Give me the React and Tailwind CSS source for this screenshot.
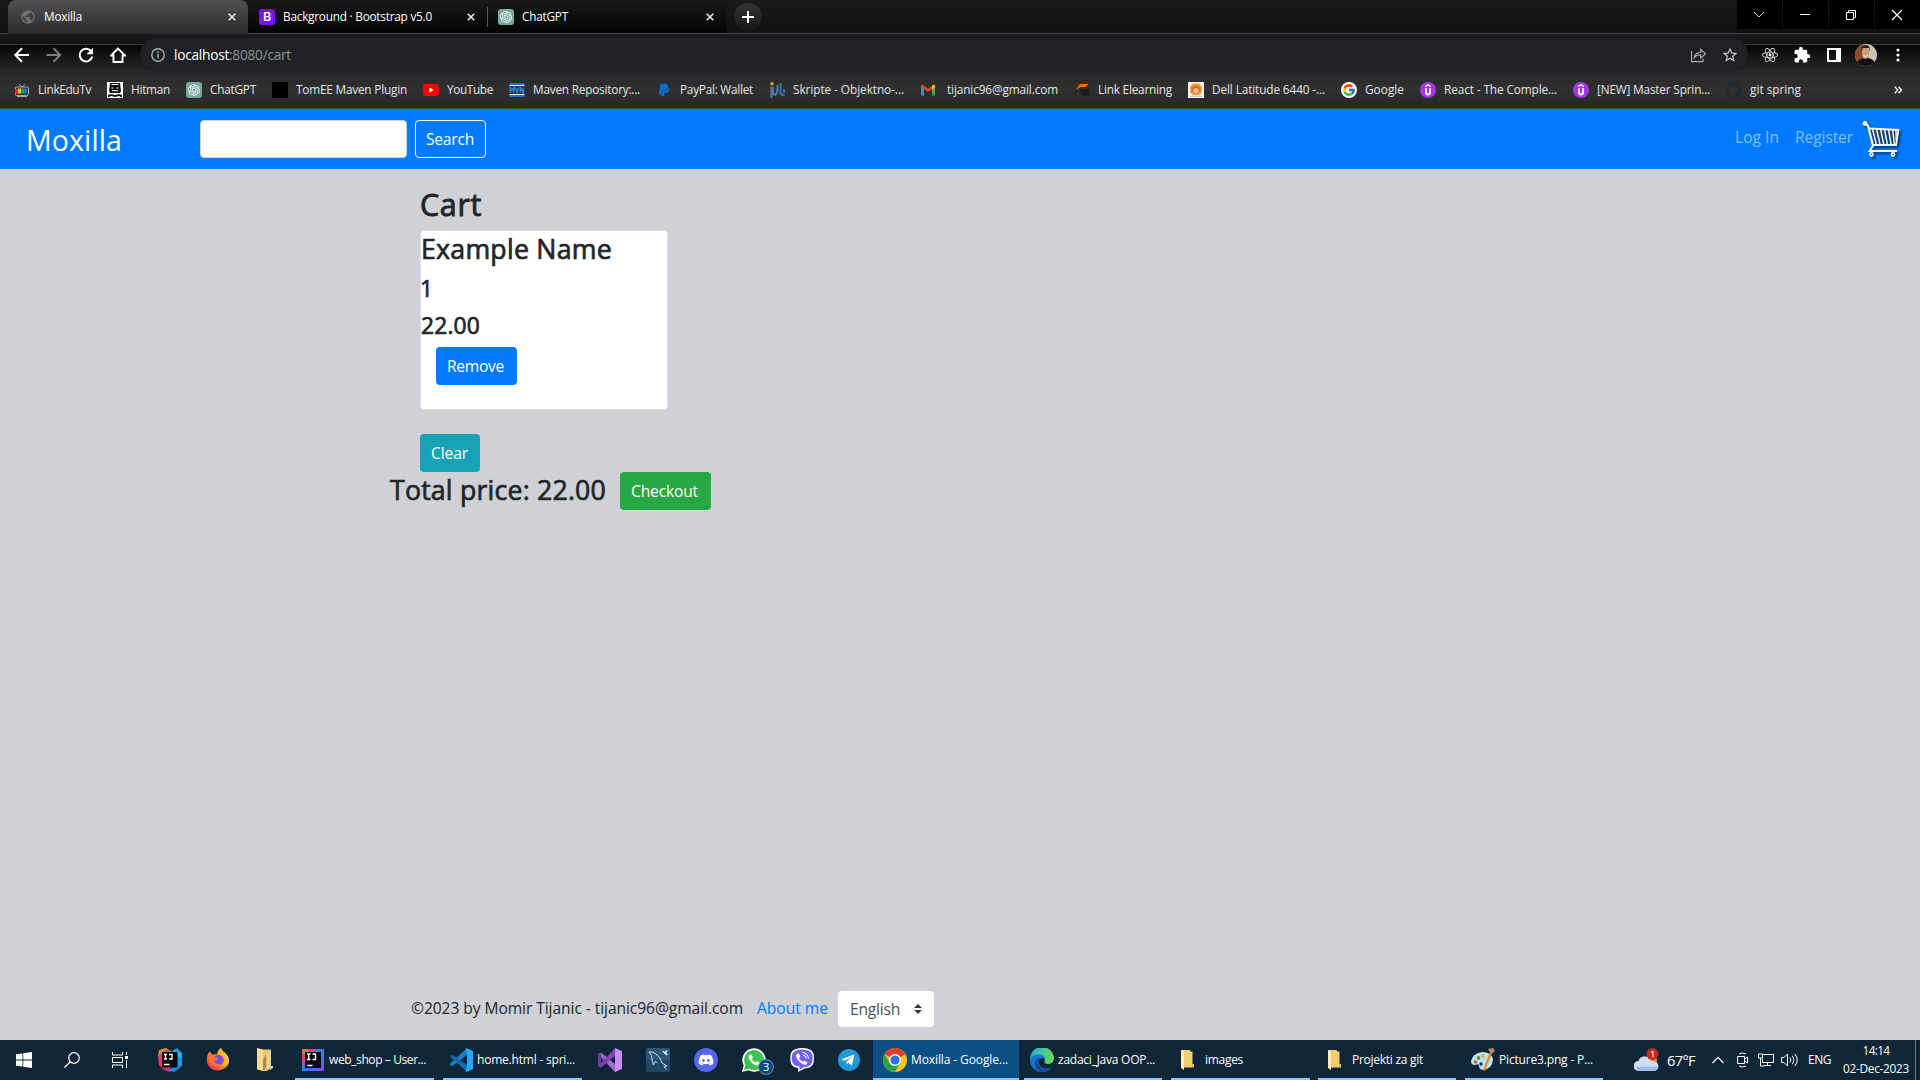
import { useLayoutEffect, useRef, useState } from "react";
import { FaPaypal, FaGithub, FaDiscord, FaTelegramPlane, FaReact } from "react-icons/fa";
import { FcGoogle } from "react-icons/fc";
import { SiOpenai } from "react-icons/si";
import { MdExtension, MdOutlineStarBorder, MdPublic } from "react-icons/md";

/* Single-line label whose letter spacing is adjusted to fill a given width. */
function Label({ w, className = "", children }) {
  const ref = useRef(null);
  const [spacing, setSpacing] = useState(0);
  useLayoutEffect(() => {
    const natural = ref.current.getBoundingClientRect().width;
    setSpacing((w - natural) / ref.current.textContent.length);
  }, [w]);
  return (
    <span className={"block shrink-0 whitespace-nowrap " + className} style={{ width: w }}>
      <span ref={ref} style={{ letterSpacing: spacing }}>{children}</span>
    </span>
  );
}

/* ---------- small icons ---------- */

const ChatIcon = () => (
  <span className="flex size-4 shrink-0 items-center justify-center rounded-[3px] bg-[#74aa9c]">
    <SiOpenai className="size-3 text-white" />
  </span>
);

const BootstrapIcon = () => (
  <span className="flex size-4 shrink-0 items-center justify-center rounded-[3px] bg-[#7a12f5] text-[13px] font-semibold leading-none text-white">B</span>
);

const CloseX = () => (
  <svg viewBox="0 0 8 8" className="size-2 shrink-0"><path d="M.7.7l6.6 6.6M7.3.7L.7 7.3" stroke="#e8e8e8" strokeWidth="1.6" /></svg>
);

const TvIcon = () => (
  <svg viewBox="0 0 16 16" className="size-4 shrink-0">
    <path d="M5 2l3 3 3-3" stroke="#aaa" fill="none" />
    <rect x="1.500" y="5" width="13" height="8.500" rx="1" fill="#333" stroke="#a8a8a8" />
    <path d="M1 7h3v4.500H1z" fill="#e33022" /><path d="M4 6.500h3v5H4z" fill="#f3c41c" />
    <path d="M7 6.500h3v5H7z" fill="#22a24a" /><path d="M10 6.500h3v5h-3z" fill="#1f6fd0" />
    <path d="M3 14.500h10" stroke="#aaa" />
  </svg>
);

const HitmanIcon = () => (
  <svg viewBox="0 0 16 16" className="size-4 shrink-0">
    <path d="M0 0h16v16H0z" fill="#fff" />
    <path d="M3 1h10l1 8-1 2H3L2 9z" fill="#111" />
    <path d="M4.500 2.500h7M4.500 6h2M9.500 6h2M5 8.700h6" stroke="#fff" />
    <path d="M1 15.500V13q3-1.500 7 0 4-1.500 7 0v2.500l-3-1.500-4 1-4-1z" fill="#111" />
  </svg>
);

const YoutubeIcon = () => (
  <svg viewBox="0 0 16 16" className="size-4 shrink-0">
    <rect x="0" y="2" width="16" height="12" rx="3.2" fill="#f00" /><path d="M6.4 5.5v5L10.8 8z" fill="#fff" />
  </svg>
);

const MavenIcon = () => (
  <svg viewBox="0 0 16 16" className="size-4 shrink-0">
    <path d="M.5 1h15v2.500H.5zM.5 13h15v2H.5z" fill="#1b6fd6" />
    <path d="M.5 3.500h15M.5 12.500h15" stroke="#fff" strokeWidth="1" />
    <path d="M1.200 11V5.500L3 8.500l1.800-3V11M6.500 5.500L8 10.500l1.500-5M11.200 11V5.500l3.200 5V5.500" stroke="#2a86ee" strokeWidth="1.400" fill="none" />
  </svg>
);

const PaypalIcon = () => (
  <span className="flex size-4 shrink-0 items-center justify-center"><FaPaypal className="size-3.5 text-[#0a6fc8]" /></span>
);

const SkripteIcon = () => (
  <svg viewBox="0 0 16 16" className="size-4 shrink-0">
    <circle cx="3" cy="1.800" r="1.700" fill="#f59b23" />
    <path d="M2.500 4.500V16M4 5v7q3.500 2 4.500-3V3" stroke="#51789c" strokeWidth="2.200" fill="none" />
    <path d="M11.500 1v9q0 4 4 3M15 7v4" stroke="#2f6ea8" strokeWidth="2.200" fill="none" />
  </svg>
);

const GmailIcon = () => (
  <svg viewBox="0 0 16 16" className="size-4 shrink-0">
    <path d="M1 4v9.500h3V6.500z" fill="#4285f4" /><path d="M15 4v9.500h-3V6.500z" fill="#34a853" />
    <path d="M1 3.500l1.500-1L8 7l5.500-4.500 1.500 1v1L8 10 1 4.500z" fill="#ea4335" />
    <path d="M12 4l2-1.500 1 1v2L12 8z" fill="#fbbc04" />
  </svg>
);

const ElearningIcon = () => (
  <svg viewBox="0 0 16 16" className="size-4 shrink-0">
    <path d="M6 7h9.500v7H9l-3-3z" fill="#1c1c1c" />
    <path d="M2 7.500L6 2h8.500l-4 4L7 5z" fill="#ef6a1a" /><path d="M3 8L1 11" stroke="#1c1c1c" strokeWidth="1.300" /><path d="M6 7.500q2-2.500 6-2" stroke="#222" fill="none" />
  </svg>
);

const DellIcon = () => (
  <svg viewBox="0 0 16 16" className="size-4 shrink-0">
    <path d="M0 0h16v16H0z" fill="#f7f3ee" /><path d="M2 13.500h12V15H2z" fill="#c9c5c0" />
    <rect x="2" y="1.500" width="12" height="11.500" rx="4.500" fill="#f09a42" />
    <circle cx="8" cy="7.500" r="4" fill="#ea6a1c" /><circle cx="8" cy="8.500" r="2.600" fill="#fbc490" />
  </svg>
);

const GoogleIcon = () => (
  <span className="flex size-4 shrink-0 items-center justify-center rounded-full bg-white"><FcGoogle className="size-3.5" /></span>
);

const UdemyIcon = () => (
  <svg viewBox="0 0 16 16" className="size-4 shrink-0">
    <circle cx="8" cy="8" r="8" fill="#a435f0" />
    <path d="M5.300 4.500L8 2.800l2.700 1.700" stroke="#fff" strokeWidth="1.400" fill="none" />
    <path d="M6 6.300V10.500a2 2 0 004 0V6.300" stroke="#fff" strokeWidth="1.800" fill="none" />
  </svg>
);

const BOOKMARKS = [
  [TvIcon, "LinkEduTv", 53],
  [HitmanIcon, "Hitman", 39],
  [ChatIcon, "ChatGPT", 46],
  [() => <span className="size-4 shrink-0 bg-black" />, "TomEE Maven Plugin", 111],
  [YoutubeIcon, "YouTube", 46],
  [MavenIcon, "Maven Repository:...", 107],
  [PaypalIcon, "PayPal: Wallet", 73],
  [SkripteIcon, "Skripte - Objektno-...", 111],
  [GmailIcon, "tijanic96@gmail.com", 111, "ml-[3px]"],
  [ElearningIcon, "Link Elearning", 74],
  [DellIcon, "Dell Latitude 6440 -...", 113],
  [GoogleIcon, "Google", 39],
  [UdemyIcon, "React - The Comple...", 113],
  [UdemyIcon, "[NEW] Master Sprin...", 113],
  [() => <FaGithub className="size-4 shrink-0 text-[#24292e]" />, "git spring", 51],
];

/* ---------- browser chrome ---------- */

function TabStrip() {
  return (
    <div className="flex h-[33px] bg-linear-to-b from-[#191919] to-[#101010] pl-2 text-[11.800px] text-white">
      <div className="flex h-[34px] w-60 items-center rounded-t-lg bg-linear-to-b from-[#515151] to-[#2b2b2b] pl-3 pr-3">
        <MdPublic className="size-4 text-[#6d7175]" />
        <Label w={38} className="ml-2">Moxilla</Label>
        <span className="ml-auto"><CloseX /></span>
      </div>
      <div className="flex w-[239px] items-center rounded-t-lg bg-linear-to-b from-[#1a1a1a] to-[#050505] pl-[11px] pr-3">
        <BootstrapIcon />
        <Label w={149} className="ml-2 pt-px">Background · Bootstrap v5.0</Label>
        <span className="ml-auto"><CloseX /></span>
      </div>
      <div className="flex w-[239px] items-center rounded-t-lg bg-linear-to-b from-[#1a1a1a] to-[#050505] pr-3">
        <span className="h-5 w-px bg-[#5a5a5a]" />
        <span className="ml-[10px]"><ChatIcon /></span>
        <Label w={46} className="ml-2 pt-px">ChatGPT</Label>
        <span className="ml-auto"><CloseX /></span>
      </div>
      <div className="ml-2 mt-[3px] flex size-7 items-center justify-center rounded-full bg-linear-to-b from-[#363636] to-[#151515]">
        <svg viewBox="0 0 12 12" className="size-3"><path d="M6 0v12M0 6h12" stroke="#fff" strokeWidth="2" /></svg>
      </div>
      <div className="ml-auto flex h-[29px] gap-px">
        <span className="flex w-[45px] items-center justify-center bg-black pr-[2px]"><svg viewBox="0 0 12 12" className="size-3"><path d="M1 3l5 5 5-5" stroke="#ddd" fill="none" /></svg></span>
        <span className="flex w-[45px] items-center justify-center bg-black pr-[2px]"><span className="h-px w-[10px] bg-white" /></span>
        <span className="flex w-[45px] items-center justify-center bg-black pr-[2px]"><svg viewBox="0 0 12 12" className="size-3"><path d="M1.500 3.500h7v7h-7zM3.500 3.500v-2h7v7h-2" stroke="#fff" fill="none" /></svg></span>
        <span className="flex w-[45px] items-center justify-center bg-black pr-[2px]"><svg viewBox="0 0 12 12" className="size-3"><path d="M1 1l10 10M11 1L1 11" stroke="#fff" strokeWidth="1.200" fill="none" /></svg></span>
      </div>
    </div>
  );
}

const Avatar = () => (
  <svg viewBox="0 0 22 22" className="size-[22px]">
    <defs><clipPath id="av"><circle cx="11" cy="11" r="11" /></clipPath></defs>
    <g clipPath="url(#av)">
      <path d="M0 0h22v22H0z" fill="#c9c4b2" /><path d="M0 0h8v22H0z" fill="#8a4a2c" />
      <path d="M1 22q1-7 8-8h4q7 1 8 8z" fill="#100e12" />
      <ellipse cx="10.500" cy="9" rx="3.700" ry="6" fill="#d09a80" />
      <path d="M6 8Q5.500 1 10.500 1T15 8l-1-4H7z" fill="#2a1d18" /><path d="M8.500 11.500q2 2 4 0" stroke="#fff" strokeWidth="1" fill="none" />
    </g>
  </svg>
);

function Toolbar() {
  return (
    <div className="h-[39px] border-t border-[#454545] bg-[linear-gradient(to_bottom,#1c1c1c_0,#121212_10px,#3a3a3a_10px,#3a3a3a_11px,#060606_11px,#2a2a2a_39px)]">
      <div className="flex h-full items-center pt-1">
        <div className="flex w-[140px] gap-4 pl-[14px]">
          <svg viewBox="0 0 16 16" className="size-4"><path d="M15 8H1.500M8 1.300L1.300 8 8 14.700" stroke="#fff" strokeWidth="2" fill="none" /></svg>
          <svg viewBox="0 0 16 16" className="size-4"><path d="M.5 8H14M7.500 1.300L14.200 8l-6.700 6.700" stroke="#7c7c7c" strokeWidth="2" fill="none" /></svg>
          <svg viewBox="0 0 16 16" className="size-4"><path d="M13.300 4.600A6.300 6.300 0 1014.200 9.500" stroke="#fff" strokeWidth="2" fill="none" /><path d="M15 .8v6.400H8.600z" fill="#fff" /></svg>
          <svg viewBox="0 0 16 16" className="size-4"><path d="M8 1.500L1 8.500h2.500V15h9V8.500H15z" stroke="#fff" strokeWidth="1.900" fill="none" /></svg>
        </div>
        <div className="flex h-[34px] w-[1608px] items-center rounded-full bg-[#202124] pl-[11px] text-[13.700px]">
          <svg viewBox="0 0 14 14" className="size-[14px]"><circle cx="7" cy="7" r="6.200" stroke="#a6aaae" strokeWidth="1.400" fill="none" /><path d="M7 6v4.300M7 3.300v1.600" stroke="#a6aaae" strokeWidth="1.500" /></svg>
          <Label w={117} className="ml-[9px] pt-px text-[#8f9296]"><span className="text-white">localhost</span>:8080/cart</Label>
          <svg viewBox="0 0 16 16" className="ml-auto size-4"><path d="M1.500 4v10.700h11.500v-3M4.200 10.500q1-5 6.500-5V2.300l4.800 4.500L10.700 11V8q-4-.3-6.500 2.500z" stroke="#a9abad" strokeWidth="1.200" fill="none" /></svg>
          <MdOutlineStarBorder className="ml-[15px] mr-[9px] size-[18px] text-[#c9c9c9]" />
        </div>
        <div className="flex items-center text-white">
          <FaReact className="ml-[14px] size-4" />
          <MdExtension className="ml-[15px] size-[18px]" />
          <svg viewBox="0 0 14 14" className="ml-4 size-[14px]"><path d="M1 1h12v12H1z" stroke="#fff" strokeWidth="2" fill="none" /><path d="M9 0h5v14H9z" fill="#fff" /></svg>
          <span className="ml-[14px]"><Avatar /></span>
          <svg viewBox="0 0 4 14" className="ml-[19px] h-[14px] w-1"><circle cx="2" cy="2" r="1.600" fill="#fff" /><circle cx="2" cy="7" r="1.600" fill="#fff" /><circle cx="2" cy="12" r="1.600" fill="#fff" /></svg>
        </div>
      </div>
    </div>
  );
}

function BookmarkBar() {
  return (
    <div className="flex h-[37px] items-center gap-4 border-b border-[#464646] bg-linear-to-b from-[#282828] via-[#303030] to-[#272727] pl-[14px] text-[11.800px] text-[#e6e6e6]">
      {BOOKMARKS.map(([Icon, text, w, extra]) => (
        <div key={text} className="flex items-center gap-2">
          <Icon />
          <Label w={w} className={extra}>{text}</Label>
        </div>
      ))}
      <svg viewBox="0 0 8 8" className="ml-auto mr-[18px] size-2"><path d="M.8.800L3.800 4l-3 3.200M4.500.800L7.500 4l-3 3.200" stroke="#fff" strokeWidth="1.300" fill="none" /></svg>
    </div>
  );
}

/* ---------- shop page ---------- */

const CartIcon = () => (
  <svg viewBox="0 0 40 40" className="size-10 drop-shadow-[2px_2px_1px_rgba(0,0,0,0.55)]">
    <path d="M7 9.500l29 1-3 14H11z" fill="#0b3f78" />
    <g stroke="#f7f4ee" fill="none" strokeLinecap="round">
      <path d="M2.500 3L6 5.500 11 25.500" strokeWidth="2.200" />
      <path d="M7 8.500l29.500 1.500-2.500 15H11.500" strokeWidth="1.900" />
      <path d="M10.500 9l4 16M14.500 9l3.700 16M18.500 9l3.400 16M22.500 9.500l3 15.500M26.500 9.500l2.700 15.500M30.500 9.500l2 15.500M34 10l.2 10" strokeWidth="1.500" />
      <path d="M11.500 25L7.500 31h27" strokeWidth="1.900" />
      <circle cx="9.500" cy="34.500" r="1.600" strokeWidth="1.600" /><circle cx="31" cy="34.500" r="1.600" strokeWidth="1.600" />
    </g>
    <circle cx="3" cy="3.500" r="2.400" fill="#f7f4ee" />
  </svg>
);

function Navbar() {
  return (
    <nav className="flex h-[60px] items-center bg-[#007bff] pl-[26px] text-white">
      <Label w={96} className="mr-[78px] pt-[2px] text-[28.500px] leading-[40px]">Moxilla</Label>
      <input className="h-[38px] w-[207px] rounded border border-[#ced4da] bg-white" />
      <button className="ml-2 flex h-[38px] w-[71px] items-center justify-center rounded border border-[#f8f9fa] pr-px pt-px text-[15.600px]"><Label w={48}>Search</Label></button>
      <div className="ml-auto flex items-center text-[15.600px] text-white/50">
        <Label w={44} className="-mt-[2px] mr-4">Log In</Label>
        <Label w={58} className="-mt-[2px] mr-[9px]">Register</Label>
        <span className="mr-[18px] mt-[2px]"><CartIcon /></span>
      </div>
    </nav>
  );
}

function CartPage() {
  return (
    <main className="flex h-[871px] flex-col bg-[#d0d1d6] text-[#212529]">
      <section className="pl-[420px] pt-4">
        <h2 className="[-webkit-text-stroke:0.9px_#212529]"><Label w={62} className="pt-px text-[30.500px] leading-[37px]">Cart</Label></h2>
        <div className="mt-[7px] h-[180px] w-[248px] rounded border border-[#dfdfdf] bg-white">
          <div className="[-webkit-text-stroke:0.700px_#212529]">
            <Label w={191} className="pt-px text-[26.700px] leading-[34px]">Example Name</Label>
            <Label w={10} className="mt-[9px] -ml-px text-[22.800px] leading-[28px]">1</Label>
            <Label w={59} className="mt-[9px] text-[22.800px] leading-[28px]">22.00</Label>
          </div>
          <button className="ml-[15px] mt-[7px] flex h-[38px] w-[81px] items-center justify-center rounded bg-[#007bff] pr-[2px] pt-[2px] text-[15.600px] text-white"><Label w={57}>Remove</Label></button>
        </div>
        <button className="mt-6 flex h-[38px] w-[60px] items-center justify-center rounded bg-[#17a2b8] pr-px pt-[2px] text-[15.600px] text-white"><Label w={37}>Clear</Label></button>
      </section>
      <section className="flex h-[38px] items-center pl-[390px]">
        <Label w={216} className="-mt-[2px] text-[26.700px] leading-[34px] [-webkit-text-stroke:0.700px_#212529]">Total price: 22.00</Label>
        <button className="ml-[14px] flex h-[38px] w-[91px] items-center justify-center rounded bg-[#28a745] pr-[2px] pt-px text-[15.600px] text-white"><Label w={67}>Checkout</Label></button>
      </section>
      <footer className="mt-auto mb-[13px] flex h-9 items-center pl-[411px] text-[15.600px]">
        <Label w={332} className="-mt-px">©2023 by Momir Tijanic - tijanic96@gmail.com</Label>
        <Label w={71} className="-mt-px ml-[14px] text-[#007bff]">About me</Label>
        <div className="ml-[10px] flex h-9 w-24 items-center rounded bg-white pl-3 text-[#495057]">
          <Label w={50} className="pt-[2px]">English</Label>
          <svg viewBox="0 0 8 10" className="ml-[14px] h-[10px] w-2"><path d="M4 0l4 4H0zM4 10l4-4H0z" fill="#343a40" /></svg>
        </div>
      </footer>
    </main>
  );
}

/* ---------- taskbar ---------- */

const IdeaIcon = () => (
  <svg viewBox="0 0 24 24" className="size-6">
    <path d="M1 2l7-2 6 4-5 10-7-1-2-5z" fill="#fb8a2e" /><path d="M0 8L8 1l4 3-6 17-5-4z" fill="#f3316c" />
    <path d="M14 3l5-3 5 5v13l-8 6z" fill="#159be8" /><path d="M17 3l6 2v5l-5-2z" fill="#18c6ee" />
    <path d="M2 19l6 4 5 1 2-6z" fill="#e32a72" /><path d="M10 22l6 2 7-6-3-1z" fill="#138bea" />
    <path d="M4 4h15.500v15.500H4z" fill="#07070a" />
    <path d="M6 6.500h3M7.500 6.500V11M6 11h3M11 6.500h3V11h-3M6 16.500h5.500" stroke="#fff" strokeWidth="1.300" fill="none" />
  </svg>
);

const IdeaSquareIcon = () => (
  <svg viewBox="0 0 22 22" className="size-[22px]">
    <defs><linearGradient id="ij" x1="1" y1="0" x2="0" y2="1"><stop offset="0" stopColor="#1f8cf0" /><stop offset=".5" stopColor="#7857dd" /><stop offset="1" stopColor="#1589ef" /></linearGradient></defs>
    <path d="M0 0h22v22H0z" fill="url(#ij)" /><path d="M0 0h14L3 14H0z" fill="#e93f72" /><path d="M0 0h6v5H0z" fill="#ee6b58" /><path d="M3 3h16v16H3z" fill="#08070d" />
    <path d="M5 5h3.500M6.700 5v5.500M5 10.500h3.500M10.500 5h3v5.500h-3M5.500 16.500h5" stroke="#fff" strokeWidth="1.400" fill="none" />
  </svg>
);

const FirefoxIcon = () => (
  <svg viewBox="0 0 24 24" className="size-6">
    <defs><linearGradient id="ff" x1="1" y1="0" x2="0" y2="1"><stop offset="0" stopColor="#fff04a" /><stop offset=".45" stopColor="#ff9a20" /><stop offset="1" stopColor="#f5156c" /></linearGradient></defs>
    <path d="M3.500 3.500L7 7q2-1 4-.5Q12 1 15.500 0q0 3 3.500 5.500 4.500 4 4 9a11.300 10 0 01-22.300-1Q.5 7 3.500 3.500z" fill="url(#ff)" />
    <circle cx="12.500" cy="12" r="5.200" fill="#8048df" />
    <path d="M3 10q3-2 6-.5l3 1q-1 2-4 2.500 2 4 7 3-4 4-8 1t-4-7z" fill="#ff7b28" />
    <path d="M15 1q5 5 5 10 0 5-5 7 6 0 7.500-5T15 1z" fill="#ffc72e" />
  </svg>
);

const ExplorerIcon = ({ className }) => (
  <svg viewBox="0 0 17 24" className={className}>
    <path d="M1 0l6 1.500V23L1 21.500z" fill="#f9dc8d" />
    <path d="M7 1.500h8V20l-4 3H7z" fill="#e6c478" />
    <path d="M7 12l3.500-6v12L7 24z" fill="#a98a48" />
    <path d="M10.500 6L15 2v18l-4.500 1z" fill="#efd48c" />
    <path d="M14 18h3v2l-3 2z" fill="#b9d3e6" />
  </svg>
);

const FolderIcon = () => (
  <svg viewBox="0 0 14 20" className="h-5 w-[14px]">
    <path d="M1 0h9v1.500h2.500V14H14v3.500H4L1 17z" fill="#f3ce6c" /><path d="M1 0l3 1.500V20L1 18z" fill="#fff0b8" /><path d="M12 2v12h2v3h-2z" fill="#e2b64d" />
  </svg>
);

const CodeIcon = () => (
  <svg viewBox="0 0 24 24" className="size-6">
    <path d="M1 15.500L17.500.8 18 7 3 18.200 1 17z" fill="#1480cc" /><path d="M1 8.500l2-1.800L18 17l-.5 6.500z" fill="#0d6cb4" />
    <path d="M17.500 0L24 3v18l-6.500 3-1-1 1.500-5V6l-1.500-5z" fill="#29a8f4" />
  </svg>
);

const StudioIcon = () => (
  <svg viewBox="0 0 24 24" className="size-6">
    <path d="M0 6l3-1.500 14 11.500v8z" fill="#a36ad8" /><path d="M0 6v12l3 1.500L17 8V0L3 15V9z" fill="#7a44b0" />
    <path d="M17 0l7 3v18l-7 3z" fill="#c78df5" /><path d="M0 6l3-1.500V15L0 18z" fill="#683b98" />
  </svg>
);

const MysqlIcon = () => (
  <svg viewBox="0 0 24 24" className="size-6">
    <rect width="24" height="24" rx="2" fill="#2b587a" /><path d="M0 12h24v10a2 2 0 01-2 2H2a2 2 0 01-2-2z" fill="#1f4766" />
    <path d="M3 4q4-1 7 2 5 4 6 9l5 3-3 .500 2.500 3M3 4q3 3 3 7 0 4 1.500 6L8.500 14q2-1 3 1" stroke="#cfdde8" strokeWidth="1" fill="none" />
    <path d="M16.500 3l5 4M18.500 6L21 2.500" stroke="#e7eef3" strokeWidth="1.500" />
  </svg>
);

const WhatsappIcon = () => (
  <span className="relative block size-6">
    <svg viewBox="0 0 24 24" className="size-6">
      <path d="M0 24l1.700-6.500A11.700 11.700 0 116.500 22.300z" fill="#fff" /><path d="M2 22l1.400-5A10 10 0 117 20.700z" fill="#3dc251" />
      <path d="M8 6.500q-2 1-1.500 3Q9 16 15 17.500q2 0 3-2.500l-3-2-1.500 1.500Q11 13.500 9.800 11L11 9.500 9.500 6.500z" fill="#fff" />
    </svg>
    <span className="absolute left-4 top-[11px] flex size-4 items-center justify-center rounded-full border border-[#7590a8] bg-[#064a80] text-[11.500px] leading-none text-white">3</span>
  </span>
);

const ViberIcon = () => (
  <svg viewBox="0 0 24 24" className="size-6">
    <path d="M12 0q7 0 10 3t1.500 12q-1.500 5-9 5.500L8 24v-4Q1 19 .5 13-.5 5 3 2.500 6 0 12 0z" fill="#fff" />
    <path d="M12 1.500q6 0 8.800 2.500t1.400 10q-1.500 5-8.500 5.200L9.500 22v-3.500Q2.500 18 1.900 12.500 1 6 4 3.700 7 1.500 12 1.500z" fill="#7360f2" />
    <path d="M7.500 5.500q-2 1-1.500 2.500Q8 14.500 15 17q1.500 0 2.500-2.300L14.500 12.500 13 14q-3-1.300-4-4L10.300 8.500 9 5.500z" fill="#fff" />
    <path d="M12.500 4.500q5.500.5 6 6M13 7q3 .3 3.400 3.300" stroke="#fff" fill="none" />
  </svg>
);

const ChromeIcon = () => (
  <svg viewBox="0 0 24 24" className="size-6">
    <circle cx="12" cy="12" r="12" fill="#fcc419" />
    <path d="M12 12L1.600 6A12 12 0 0122.400 6z" fill="#e53b2e" /><path d="M12 6h10.400L12 12z" fill="#e53b2e" />
    <path d="M1.600 6A12 12 0 0012 24l5.200-9L12 12 6.800 15z" fill="#2ba24c" />
    <circle cx="12" cy="12" r="6" fill="#fff" /><circle cx="12" cy="12" r="4.600" fill="#2a72e8" />
  </svg>
);

const EdgeIcon = () => (
  <svg viewBox="0 0 24 24" className="size-6">
    <defs><linearGradient id="ed"><stop offset="0" stopColor="#27a6e6" /><stop offset="1" stopColor="#67df4e" /></linearGradient></defs>
    <path d="M0 12A12 12 0 0124 10q0 5-5 6-5 0-4.500-2.500Q16 9 11 8 3 7 0 12z" fill="url(#ed)" />
    <path d="M0 12Q2 6 9 6.500q6 .5 6 5-1-2-3-1.500-4 1-3 6 2 5 8 4.500 3 0 4.500-1Q18 24 12 24A12 12 0 010 12z" fill="#1675ce" />
    <path d="M9 13q-1 8 7 8 4 0 6-2-4 6-12 4.500Q3 20 5 13.500 6.500 10 12 10q-2 1-3 3z" fill="#114b98" />
  </svg>
);

const PaintIcon = () => (
  <svg viewBox="0 0 24 24" className="size-6">
    <path d="M11 4q10 0 11 8-1 9-10 10-4-1-4-4T4 17q-4 0-4-4Q2 5 11 4z" fill="#bfe2f3" />
    <circle cx="12" cy="8" r="1.900" fill="#f0aa25" /><circle cx="7.500" cy="10" r="1.900" fill="#3b9f4b" /><circle cx="4.500" cy="14" r="1.700" fill="#dd4a36" /><circle cx="10" cy="16" r="1.700" fill="#103550" />
    <path d="M19 4l2 1-7 18-2-1z" fill="#e58a25" /><path d="M17 1l5-1 2 3-4 3z" fill="#b98a65" />
  </svg>
);

function Window({ className = "", icon, iconClass, children, w }) {
  return (
    <div className={"flex h-10 shrink-0 items-center border-b-2 border-[#90c3f3] pt-[2px] text-[12px] text-white " + className}>
      <span className={iconClass}>{icon}</span>
      <Label w={w}>{children}</Label>
    </div>
  );
}

function Taskbar() {
  return (
    <div className="flex h-10 items-center bg-[#0f2538] text-white">
      <svg viewBox="0 0 16 16" className="ml-4 size-4"><path d="M0 2.300L6.500 1.400v6.200H0zM7.300 1.300L16 0v7.600H7.300zM0 8.400h6.500v6.200L0 13.700zM7.300 8.400H16V16l-8.700-1.300z" fill="#fff" /></svg>
      <svg viewBox="0 0 16 16" className="ml-8 size-4"><circle cx="10" cy="6" r="5.300" stroke="#fff" strokeWidth="1.200" fill="none" /><path d="M6.300 9.700L.5 15.500" stroke="#fff" strokeWidth="1.300" /></svg>
      <svg viewBox="0 0 16 16" className="ml-8 size-4"><path d="M.5 0v3h10V0M.5 5.500h10v5H.5zM.5 16v-3h10v3M14.500 0v3M14.500 8v8" stroke="#fff" fill="none" /><path d="M13 4h3v3h-3z" fill="#fff" /></svg>
      <span className="ml-[30px]"><IdeaIcon /></span>
      <span className="ml-6"><FirefoxIcon /></span>
      <ExplorerIcon className="ml-[26px] mr-[22px] h-6 w-[17px]" />
      <Window className="w-[139px]" iconClass="w-[34px] pl-[7px]" icon={<IdeaSquareIcon />} w={97}>web_shop – User...</Window>
      <Window className="ml-[9px] w-[139px]" iconClass="w-[34px] pl-[6px]" icon={<CodeIcon />} w={98}>home.html - spri...</Window>
      <div className="ml-4 flex w-[275px] gap-6">
        <StudioIcon />
        <MysqlIcon />
        <span className="flex size-6 items-center justify-center rounded-full bg-[#5865f2]"><FaDiscord className="size-4" /></span>
        <WhatsappIcon />
        <ViberIcon />
        <span className="mt-px flex size-[22px] items-center justify-center rounded-full bg-[#2399d6]"><FaTelegramPlane className="mr-[2px] size-[14px]" /></span>
      </div>
      <Window className="w-[146px] bg-[#0b4f87]" iconClass="w-[38px] pl-[10px]" icon={<ChromeIcon />} w={97}>Moxilla - Google...</Window>
      <Window className="ml-[5px] w-[138px]" iconClass="w-[34px] pl-[6px]" icon={<EdgeIcon />} w={97}>zadaci_Java OOP...</Window>
      <Window className="ml-[9px] w-[139px]" iconClass="w-[34px] pl-[9px]" icon={<FolderIcon />} w={38}>images</Window>
      <Window className="ml-2 w-[138px]" iconClass="w-[34px] pl-[9px]" icon={<FolderIcon />} w={71}>Projekti za git</Window>
      <Window className="ml-[9px] w-[138px]" iconClass="w-[34px] pl-[6px]" icon={<PaintIcon />} w={94}>Picture3.png - P...</Window>
      <div className="ml-auto flex h-10 items-center">
        <svg viewBox="0 0 26 24" className="h-6 w-[26px]">
          <circle cx="17" cy="13" r="6" fill="#f29422" />
          <path d="M4.500 23a5 5 0 010-10Q6 8 11 8.500q5 .5 5.500 4.500Q24 13 24.500 18q0 4-4 5z" fill="#cfdef8" /><path d="M4 22.800a5 5 0 01-2-4h22q0 3-4 4z" fill="#9dbaec" />
          <circle cx="18.500" cy="6" r="6" fill="#c42b1c" /><path d="M17 4.500l2-1.300v6" stroke="#fff" fill="none" />
        </svg>
        <Label w={28} className="ml-[7px] pt-px text-[14.600px]">67°F</Label>
        <svg viewBox="0 0 12 8" className="ml-[17px] h-2 w-3"><path d="M.5 7L6 1.300 11.500 7" stroke="#fff" strokeWidth="1.200" fill="none" /></svg>
        <svg viewBox="0 0 12 16" className="ml-[13px] h-4 w-3"><path d="M.6 4.500h7v7h-7zM7.600 7l3-2v6l-3-2M2 2q3-2 7 0M2 14q3 2 7 0" stroke="#fff" fill="none" /></svg>
        <svg viewBox="0 0 16 14" className="ml-[9px] h-[14px] w-4"><path d="M5 1.500h10.500v8H4.500V6M9.500 9.500v3M6 12.500h7M.5 1h4v4h-4zM2.500 5v8h4" stroke="#fff" fill="none" /></svg>
        <svg viewBox="0 0 18 14" className="ml-[7px] h-[14px] w-[18px]"><path d="M.6 4.500H3L6.500 1v12L3 9.500H.6zM9 4.500q1.500 2.500 0 5M11.500 2.800q3 4.200 0 8.400M14 1q4.500 6 0 12" stroke="#fff" fill="none" /></svg>
        <Label w={23} className="ml-[9px] text-[12px]">ENG</Label>
        <div className="-mt-[2px] ml-3 flex flex-col items-center text-[11.800px] leading-[18px]">
          <Label w={27}>14:14</Label>
          <Label w={66}>02-Dec-2023</Label>
        </div>
        <span className="ml-[6px] mr-1 h-10 w-px bg-[#6b7984]" />
      </div>
    </div>
  );
}

export default function App() {
  return (
    <div className="flex h-[1080px] w-[1920px] flex-col overflow-hidden font-['Open_Sans','Noto_Sans',sans-serif] leading-normal">
      <header>
        <TabStrip />
        <Toolbar />
        <BookmarkBar />
      </header>
      <Navbar />
      <CartPage />
      <Taskbar />
    </div>
  );
}
